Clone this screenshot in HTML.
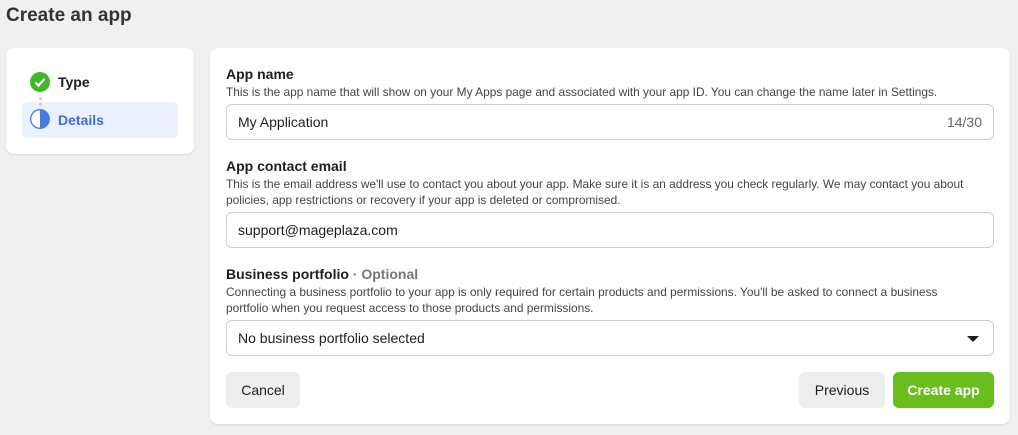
<!DOCTYPE html>
<html><head><style>
*{box-sizing:border-box;margin:0;padding:0}
body{width:1018px;height:435px;background:#f0f0f0;font-family:"Liberation Sans",Arial,sans-serif;color:#1c1e21;position:relative;overflow:hidden}
h1{position:absolute;left:6px;top:5px;font-size:19px;font-weight:bold;color:#333}
.side{position:absolute;left:6px;top:48px;width:188px;height:106px;background:#fff;border-radius:8px;box-shadow:0 1px 2px rgba(0,0,0,.1)}
.main{position:absolute;left:210px;top:48px;width:800px;height:376px;background:#fff;border-radius:8px;box-shadow:0 1px 2px rgba(0,0,0,.1)}
.lbl{position:absolute;left:16px;font-size:14px;font-weight:bold}
.desc{position:absolute;left:16px;font-size:11.9px;color:#444;line-height:16px;width:750px}
.inp{position:absolute;left:16px;width:768px;height:36px;border:1px solid #ccd0d5;border-radius:6px;font-size:14px;padding:0 11px;line-height:34px}
.btn{position:absolute;top:324px;height:36px;border-radius:6px;font-size:14px;line-height:36px;text-align:center}
</style></head><body>
<h1>Create an app</h1>
<div class="side">
 <svg style="position:absolute;left:24px;top:24px" width="20" height="20"><circle cx="10" cy="10" r="10" fill="#42b72a"/><path d="M5.5 10.5l3 3 6-6.5" stroke="#fff" stroke-width="2.2" fill="none"/></svg>
 <div style="position:absolute;left:52px;top:26px;font-size:14px;font-weight:bold">Type</div>
 <div style="position:absolute;left:33px;top:49px;width:3px;height:3px;border-radius:2px;background:#ccc"></div>
 <div style="position:absolute;left:16px;top:54px;width:156px;height:36px;background:#ebf1fc;border-radius:6px"></div>
 <div style="position:absolute;left:33px;top:55px;width:3px;height:3px;border-radius:2px;background:#ccc"></div>
 <svg style="position:absolute;left:24px;top:61px" width="20" height="20"><circle cx="10" cy="10" r="9.3" fill="#fff" stroke="#4a79e0" stroke-width="1.3"/><path d="M10 0.7a9.3 9.3 0 0 1 0 18.6z" fill="#4a79e0"/></svg>
 <div style="position:absolute;left:52px;top:64px;font-size:14px;font-weight:bold;color:#3b6fd6">Details</div>
</div>
<div class="main">
 <div class="lbl" style="top:18px">App name</div>
 <div class="desc" style="top:36px;width:770px">This is the app name that will show on your My Apps page and associated with your app ID. You can change the name later in Settings.</div>
 <div class="inp" style="top:56px">My Application<span style="float:right;color:#606770">14/30</span></div>
 <div class="lbl" style="top:110px">App contact email</div>
 <div class="desc" style="top:128px;width:760px">This is the email address we'll use to contact you about your app. Make sure it is an address you check regularly. We may contact you about policies, app restrictions or recovery if your app is deleted or compromised.</div>
 <div class="inp" style="top:164px">support@mageplaza.com</div>
 <div class="lbl" style="top:218px">Business portfolio <span style="color:#777">· Optional</span></div>
 <div class="desc" style="top:236px;width:740px">Connecting a business portfolio to your app is only required for certain products and permissions. You'll be asked to connect a business portfolio when you request access to those products and permissions.</div>
 <div class="inp" style="top:272px">No business portfolio selected<span style="position:absolute;right:14px;top:15px;border-left:6px solid transparent;border-right:6px solid transparent;border-top:6px solid #1c1e21"></span></div>
 <div class="btn" style="left:16px;width:74px;background:#eee">Cancel</div>
 <div class="btn" style="left:589px;width:86px;background:#eee">Previous</div>
 <div class="btn" style="left:683px;width:101px;background:#69bd1d;color:#fff;font-weight:bold">Create app</div>
</div>
</body></html>
